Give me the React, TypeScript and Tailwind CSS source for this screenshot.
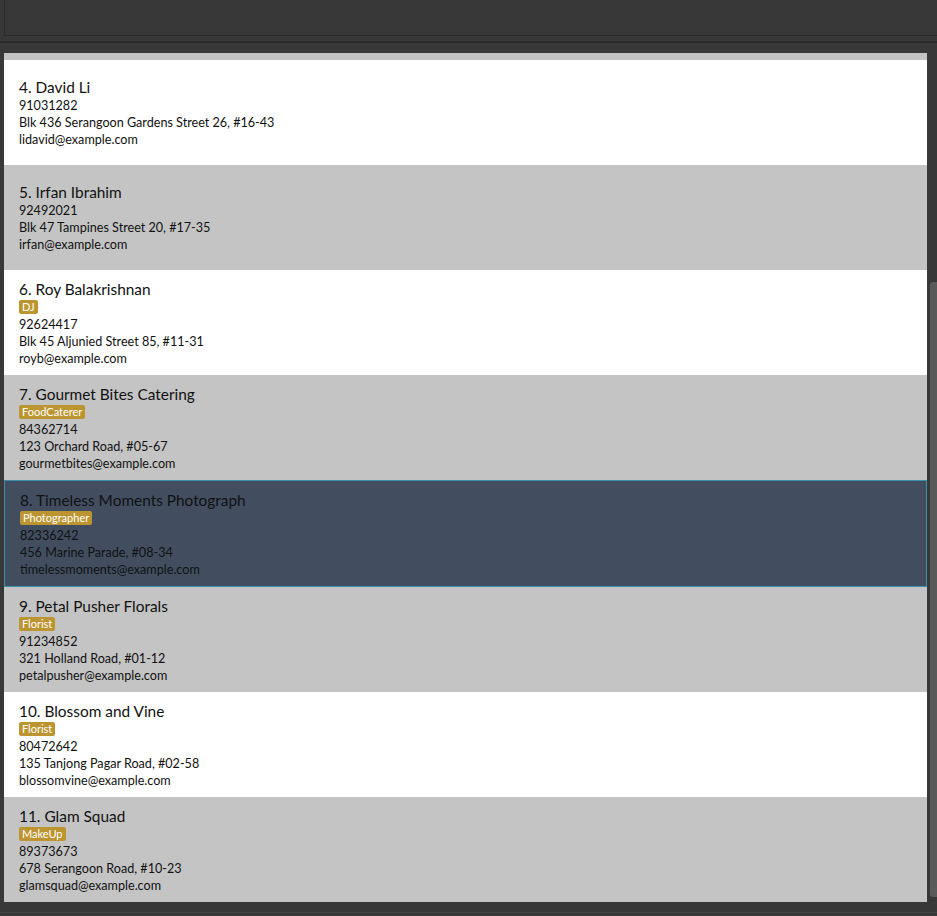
import React from "react";

type P = { id: number; name: string; tag?: string; phone: string; addr: string; email: string };

const people: P[] = [
  { id: 4, name: "David Li", phone: "91031282", addr: "Blk 436 Serangoon Gardens Street 26, #16-43", email: "lidavid@example.com" },
  { id: 5, name: "Irfan Ibrahim", phone: "92492021", addr: "Blk 47 Tampines Street 20, #17-35", email: "irfan@example.com" },
  { id: 6, name: "Roy Balakrishnan", tag: "DJ", phone: "92624417", addr: "Blk 45 Aljunied Street 85, #11-31", email: "royb@example.com" },
  { id: 7, name: "Gourmet Bites Catering", tag: "FoodCaterer", phone: "84362714", addr: "123 Orchard Road, #05-67", email: "gourmetbites@example.com" },
  { id: 8, name: "Timeless Moments Photograph", tag: "Photographer", phone: "82336242", addr: "456 Marine Parade, #08-34", email: "timelessmoments@example.com" },
  { id: 9, name: "Petal Pusher Florals", tag: "Florist", phone: "91234852", addr: "321 Holland Road, #01-12", email: "petalpusher@example.com" },
  { id: 10, name: "Blossom and Vine", tag: "Florist", phone: "80472642", addr: "135 Tanjong Pagar Road, #02-58", email: "blossomvine@example.com" },
  { id: 11, name: "Glam Squad", tag: "MakeUp", phone: "89373673", addr: "678 Serangoon Road, #10-23", email: "glamsquad@example.com" },
];

function Card({ p, idx }: { p: P; idx: number }) {
  const selected = p.id === 8;
  const bg = selected
    ? "h-[107px] bg-[#424e60] border border-[#3a8fab]"
    : idx % 2 === 0
    ? "h-[105px] bg-white"
    : "h-[105px] bg-[#c4c4c4]";
  return (
    <div className={`shrink-0 flex flex-col justify-center pl-[15px] ${bg}`}>
      <div className="text-[15.4px] leading-[20px] text-[#111]">
        {p.id}. {p.name}
      </div>
      {p.tag && (
        <div className="flex h-[17px] items-center">
          <span className="bg-[#bd9530] text-white text-[11px] leading-[14px] px-[3px] rounded-[2px]">{p.tag}</span>
        </div>
      )}
      <div className="text-[12.6px] leading-[17px] text-[#111]">{p.phone}</div>
      <div className="text-[12.6px] leading-[17px] text-[#111]">{p.addr}</div>
      <div className="text-[12.6px] leading-[17px] text-[#111]">{p.email}</div>
    </div>
  );
}

export default function App() {
  return (
    <div className="w-[937px] h-[916px] bg-[#383838] overflow-hidden relative" style={{ fontFamily: "Lato, 'Open Sans', sans-serif" }}>
      <div className="h-[36px] ml-[4px] border-l border-b border-[#2b2b2b]" />
      <div className="h-[5px]" />
      <div className="h-[2px] bg-[#2b2b2b]" />
      <div className="h-[10px]" />
      <div className="flex">
        <div className="ml-[4px] w-[923px] h-[849px] overflow-hidden flex flex-col">
          <div className="h-[7px] bg-[#c4c4c4] shrink-0" />
          {people.map((p, i) => (
            <Card key={p.id} p={p} idx={i} />
          ))}
        </div>
        <div className="w-[10px] relative">
          <div className="absolute left-[3px] top-[229px] w-[7px] h-[615px] bg-[#5a5a5a] rounded-tl-[3px] rounded-bl-[3px]" />
        </div>
      </div>
      <div className="absolute left-0 right-0 top-[912px] h-[1px] bg-[#444]" />
    </div>
  );
}
